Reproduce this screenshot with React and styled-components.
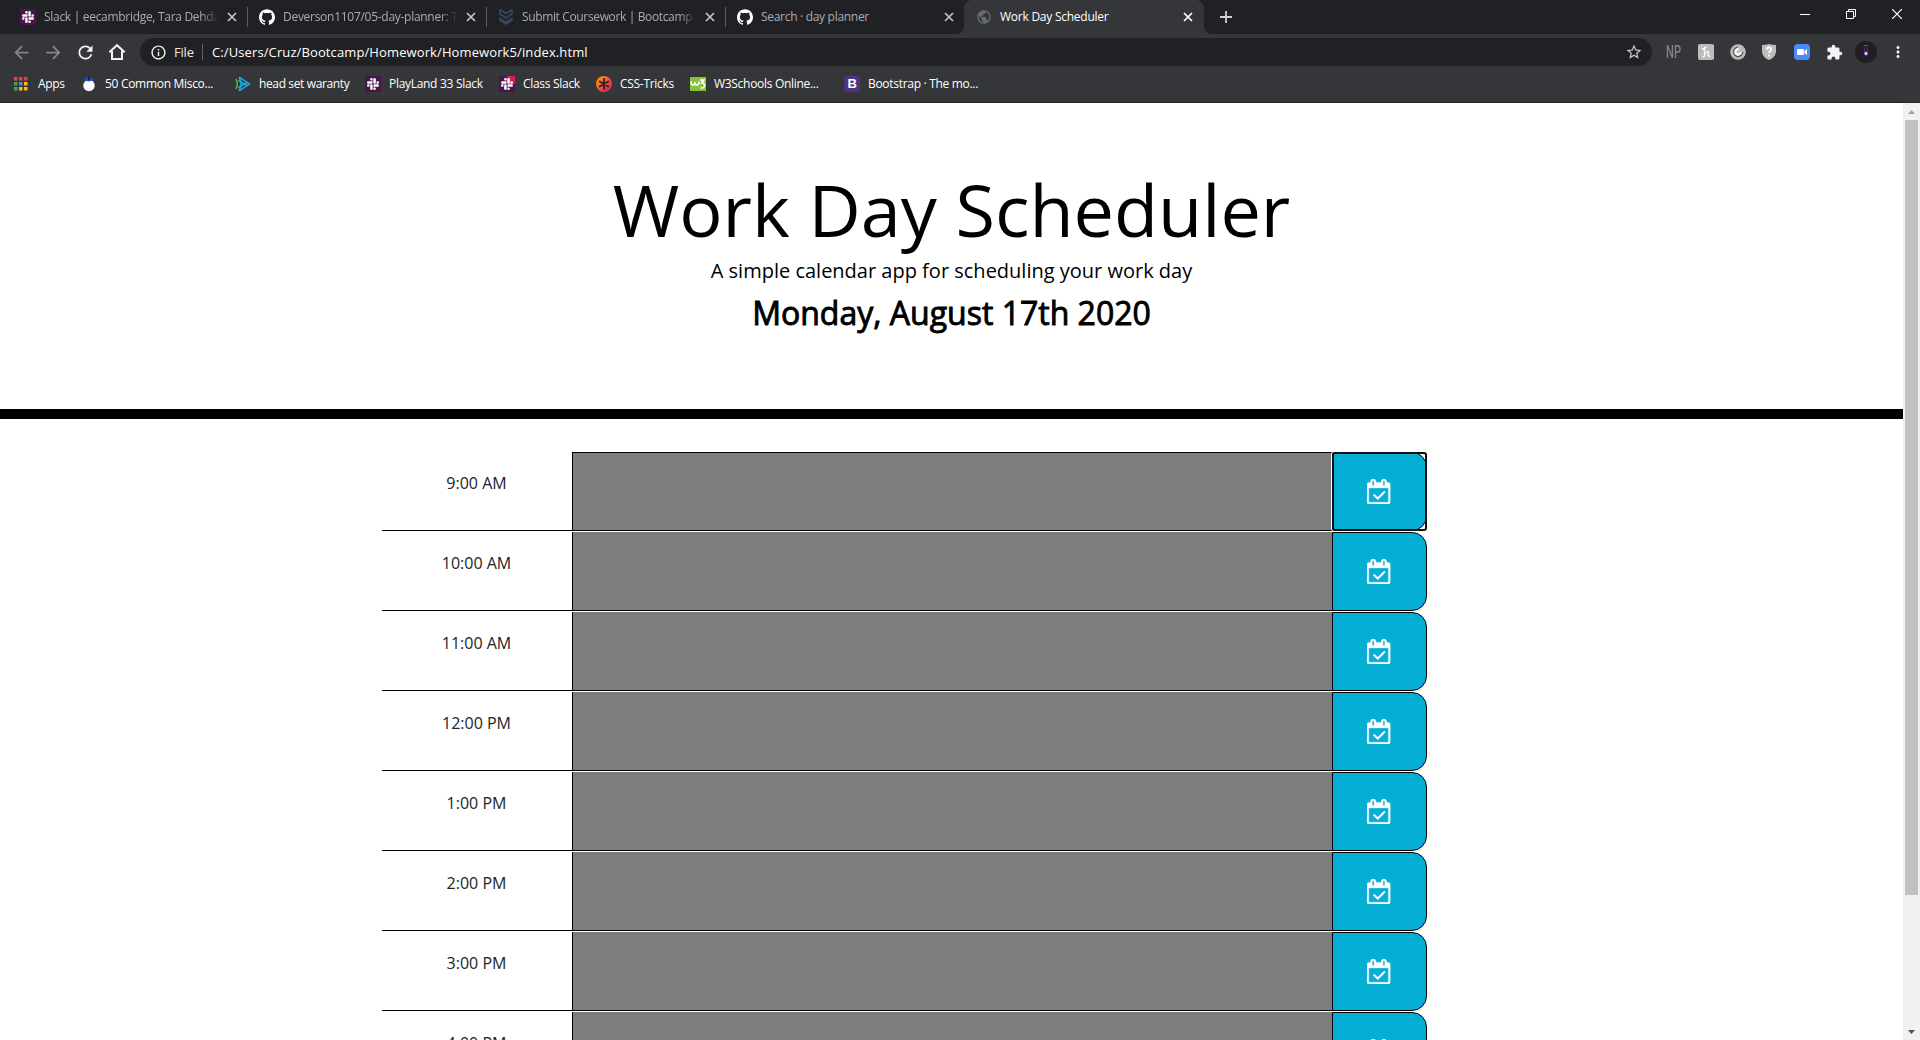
import React from 'react';
import styled, { createGlobalStyle } from 'styled-components';
import { SiGithub, SiSlack } from 'react-icons/si';
import { MdArrowBack, MdArrowForward, MdRefresh, MdInfoOutline, MdStarBorder, MdExtension, MdMoreVert, MdPublic } from 'react-icons/md';

const Global = createGlobalStyle`
  * { box-sizing: border-box; }
  html, body { margin: 0; height: 1040px; overflow: hidden; background: #fff; }
  body { font-family: "Open Sans", sans-serif; }
  svg { display: block; flex: none; }
`;

const Window = styled.div`
  width: 1920px;
  height: 1040px;
  display: flex;
  flex-direction: column;
  overflow: hidden;
`;

const TabStrip = styled.div`
  height: 34px;
  flex: none;
  display: flex;
  background: #202124;
  padding-left: 8px;
`;

const Tab = styled.div`
  width: ${p => p.$w}px;
  height: 34px;
  flex: none;
  display: flex;
  align-items: center;
  padding: 0 ${p => p.$right ?? 10}px 0 ${p => p.$left ?? 11}px;
  border-radius: 8px 8px 0 0;
  background: ${p => (p.$active ? '#35363a' : 'transparent')};
  color: ${p => (p.$active ? '#fff' : '#a9acb0')};
`;

const TabTitle = styled.div`
  flex: 1;
  min-width: 0;
  margin: 0 8px 0 8px;
  padding-bottom: 1px;
  overflow: hidden;
  white-space: nowrap;
  font-size: 12px;
  letter-spacing: ${p => p.$ls || 0}px;
  mask-image: ${p => (p.$fade ? 'linear-gradient(to right, #000 90%, transparent)' : 'none')};
`;

const TabDivider = styled.div`
  width: 1px;
  height: 20px;
  margin-top: 7px;
  flex: none;
  background: #5a5c60;
`;

const TabFoot = styled.svg`
  align-self: flex-end;
`;

const NewTab = styled.div`
  padding: 11px 0 0 8px;
`;

const WindowControls = styled.div`
  display: flex;
  align-items: center;
  gap: 36px;
  margin-left: auto;
  padding: 0 18px 6px 0;
`;

const Toolbar = styled.div`
  height: 34px;
  flex: none;
  display: flex;
  align-items: center;
  background: #35363a;
  padding: 4px 15px 2px 11px;
  color: #f1f3f4;
`;

const NavIcons = styled.div`
  display: flex;
  align-items: center;
  gap: 11px;
  width: 129px;
  flex: none;
`;

const Address = styled.div`
  width: 1512px;
  height: 28px;
  flex: none;
  display: flex;
  align-items: center;
  border-radius: 14px;
  background: #202124;
  padding: 0 9px 0 10px;
`;

const Scheme = styled.span`
  width: 28px;
  margin-left: 7px;
  font-size: 13px;
  letter-spacing: -0.2px;
  color: #e8eaed;
`;

const AddressDivider = styled.span`
  width: 1px;
  height: 16px;
  margin-right: 9px;
  background: #5f6368;
`;

const Url = styled.span`
  flex: 1;
  white-space: nowrap;
  font-size: 13px;
  letter-spacing: 0.11px;
  color: #fff;
`;

const Extensions = styled.div`
  display: flex;
  align-items: center;
  margin-left: 14px;
`;

const Slot = styled.div`
  width: ${p => p.$w}px;
  flex: none;
`;

const NpLabel = styled.span`
  display: block;
  width: 20px;
  font: 500 18px/20px Roboto, sans-serif;
  color: #818286;
  transform: scaleX(0.62);
  transform-origin: left;
`;

const Avatar = styled.div`
  width: 22px;
  height: 22px;
  border-radius: 50%;
  background: #211d20;
  display: flex;
  flex-direction: column;
  align-items: center;
  padding-top: 4px;
`;

const Bookmarks = styled.div`
  height: 35px;
  flex: none;
  display: flex;
  align-items: center;
  background: #35363a;
  border-bottom: 1px solid #242528;
  padding: 0 0 3px 14px;
`;

const Bookmark = styled.div`
  width: ${p => p.$w}px;
  flex: none;
  display: flex;
  align-items: center;
  gap: ${p => p.$gap || 8}px;
  white-space: nowrap;
  font-size: 12px;
  letter-spacing: ${p => p.$ls || 0}px;
  color: #fff;
`;

const SlackTile = styled.span`
  width: 16px;
  height: 16px;
  flex: none;
  display: flex;
  align-items: center;
  justify-content: center;
  color: #fff;
  background: ${p => (p.$badge ? 'linear-gradient(#d81f50, #d81f50) right top / 8px 8px no-repeat #4a154b' : '#4a154b')};
`;

const BootstrapTile = styled.span`
  width: 16px;
  height: 16px;
  border-radius: 3px;
  flex: none;
  background: #4c347f;
  color: #fff;
  font: bold 13px/16px "Liberation Sans", sans-serif;
  text-align: center;
`;

const W3Tile = styled.span`
  width: 16px;
  height: 14px;
  flex: none;
  background: #84c439;
`;

const Viewport = styled.div`
  flex: 1;
  min-height: 0;
  display: flex;
`;

const Page = styled.main`
  width: 1903px;
  height: 937px;
  overflow: hidden;
  background: #fff;
`;

const Header = styled.header`
  height: 316px;
  padding-top: 61px;
  border-bottom: 10px solid #000;
  text-align: center;
  color: #000;
`;

const Title = styled.h1`
  margin: 0;
  font-size: 72px;
  font-weight: 400;
  line-height: 90px;
`;

const Lead = styled.p`
  margin: 2px 0 8px;
  font-size: 20px;
  line-height: 30px;
`;

const Today = styled.p`
  margin: 0;
  font-size: 32px;
  line-height: 38px;
  -webkit-text-stroke: 0.9px #000;
`;

const Schedule = styled.section`
  width: 1140px;
  margin: 33px auto 0;
`;

const TimeBlock = styled.div`
  display: flex;
  height: 79px;
  margin-bottom: 1px;
`;

const Hour = styled.div`
  width: 190px;
  padding-top: 19px;
  border-bottom: 1px solid #000;
  text-align: center;
  font-size: 16px;
  line-height: 24px;
  color: #212529;
`;

const Entry = styled.div`
  width: 760px;
  border: 1px solid #000;
  border-top-width: ${p => (p.$first ? 1 : 0)}px;
  border-right: 0;
  background: #7d7d7d;
`;

const SaveButton = styled.button`
  position: relative;
  width: 95px;
  padding: 0;
  display: flex;
  align-items: center;
  justify-content: center;
  border: 1px solid #000;
  border-radius: 0 15px 15px 0;
  background: #06aed5;
  color: #fff;
  outline: none;
`;

const FocusRing = styled.span`
  position: absolute;
  inset: -1px;
  border: 2px solid #101010;
  border-radius: 3px;
  box-shadow: 0 0 0 1px #fff;
`;

const ScrollBar = styled.div`
  width: 17px;
  display: flex;
  flex-direction: column;
  justify-content: space-between;
  align-items: center;
  background: #f1f1f1;
`;

const ScrollThumb = styled.div`
  width: 13px;
  height: 775px;
  background: #c1c1c1;
`;

const ScrollSpace = styled.div`
  flex: 1;
`;

const ArrowBox = styled.div`
  height: 17px;
  display: flex;
  align-items: center;
`;

const Close = ({ color = '#c3c5c8' }) => (
  <svg width="10" height="10" viewBox="0 0 10 10"><path d="M1 1l8 8M9 1L1 9" stroke={color} strokeWidth="1.7" /></svg>
);

const House = () => (
  <svg width="20" height="20" viewBox="0 0 20 20" fill="none" stroke="currentColor" strokeWidth="2">
    <path d="M2.300 10.200L10 3.200l7.700 7M5 9v8h10V9" />
  </svg>
);

const CalendarCheck = () => (
  <svg width="23.2" height="25" viewBox="0 0 1664 1792" fill="currentColor" stroke="currentColor" strokeWidth="24">
    <path d="M1303 964l-512 512q-10 9-23 9t-23-9l-288-288q-9-10-9-23t9-22l46-46q9-9 22-9t23 9l220 220 444-444q10-9 23-9t22 9l46 46q9 9 9 22t-9 23zM128 1664h1408V640H128v1024zm384-1216V160q0-14-9-23t-23-9h-64q-14 0-23 9t-9 23v288q0 14 9 23t23 9h64q14 0 23-9t9-23zm768 0V160q0-14-9-23t-23-9h-64q-14 0-23 9t-9 23v288q0 14 9 23t23 9h64q14 0 23-9t9-23zm384-64v1280q0 52-38 90t-90 38H128q-52 0-90-38t-38-90V384q0-52 38-90t90-38h128v-96q0-66 47-113T416 0h64q66 0 113 47t47 113v96h384v-96q0-66 47-113t113-47h64q66 0 113 47t47 113v96h128q52 0 90 38t38 90z" />
  </svg>
);

const Chevrons = () => (
  <svg width="16" height="16" viewBox="0 0 16 16">
    <path d="M2 .5l6 4 6-4v4.500l-6 4-6-4z" fill="none" stroke="#34495e" strokeWidth="1.600" />
    <path d="M1.200 8l6.800 4.200L14.800 8v3.500L8 16l-6.800-4.500z" fill="#34495e" />
  </svg>
);

const AppsGrid = () => (
  <svg width="14" height="14" viewBox="0 0 14 14">
    {['#ea4335', '#ea4335', '#ea4335', '#34a853', '#4285f4', '#fbbc05', '#34a853', '#fbbc05', '#fbbc05'].map((c, i) => (
      <rect key={i} x={(i % 3) * 5} y={Math.floor(i / 3) * 5} width="3.5" height="3.5" fill={c} />
    ))}
  </svg>
);

const Berry = () => (
  <svg width="16" height="16" viewBox="0 0 16 16">
    <circle cx="8" cy="9.5" r="5.7" fill="#fff" />
    <path d="M3 2.500l3-1 2 1 2-1.500 1.500 1.500 2 1.500-3 .8-2.500.7-3-.7z" fill="#1b4fc4" /><path d="M8 0v4" stroke="#111" />
  </svg>
);

const PlayMark = () => (
  <svg width="16" height="16" viewBox="0 0 16 16" fill="none" strokeWidth="1.500">
    <path d="M1 3q2.500 5 0 10" stroke="#6fae3c" />
    <path d="M4 1l10.500 7L4 15M4 1q4 7 0 14M3.500 4.500L12 9.500M3.500 11.500L12 6.500" stroke="#1fa8dc" />
  </svg>
);

const AsteriskMark = () => (
  <svg width="16" height="16" viewBox="0 0 16 16">
    <defs><linearGradient id="ct" x1="0" y1="0" x2="1" y2="1"><stop offset="0.2" stopColor="#f78a12" /><stop offset="0.9" stopColor="#e01a65" /></linearGradient></defs>
    <circle cx="8" cy="8" r="8" fill="url(#ct)" />
    <path d="M8 3v10M3.700 5.500l8.600 5M12.300 5.500l-8.600 5" stroke="#35222a" strokeWidth="1.9" strokeLinecap="round" />
  </svg>
);

const W3Mark = () => (
  <W3Tile>
    <svg width="16" height="14" viewBox="0 0 16 14" fill="none" stroke="#fff" strokeWidth="1.600">
      <path d="M1 4.500q0 3.500 2 3.500t2-3q0 3 2 3t2-3.500M10 3h4l-2.300 3q3 0 2.800 2.700T10.500 11" />
    </svg>
  </W3Tile>
);

const Slack = ({ badge }) => <SlackTile $badge={badge}><SiSlack size={12} /></SlackTile>;

const tabs = [
  { w: 239, left: 12, icon: <Slack />, title: 'Slack | eecambridge, Tara Dehdari', fade: true, ls: -0.3 },
  { w: 238, icon: <SiGithub size={16} color="#fff" />, title: 'Deverson1107/05-day-planner: This', fade: true, ls: -0.28 },
  { w: 238, icon: <Chevrons />, title: 'Submit Coursework | Bootcamp Spot', fade: true, ls: -0.36 },
  { w: 230, right: 2, icon: <SiGithub size={16} color="#fff" />, title: 'Search · day planner', ls: -0.3 },
];

const bookmarks = [
  { w: 67, gap: 10, icon: <AppsGrid />, text: 'Apps' },
  { w: 154, icon: <Berry />, text: '50 Common Misco...' },
  { w: 130, icon: <PlayMark />, text: 'head set waranty', ls: -0.37 },
  { w: 134, icon: <Slack />, text: 'PlayLand 33 Slack' },
  { w: 97, icon: <Slack badge />, text: 'Class Slack' },
  { w: 94, icon: <AsteriskMark />, text: 'CSS-Tricks' },
  { w: 154, icon: <W3Mark />, text: 'W3Schools Online...' },
  { w: 150, icon: <BootstrapTile>B</BootstrapTile>, text: 'Bootstrap · The mo...' },
];

const hours = ['9:00 AM', '10:00 AM', '11:00 AM', '12:00 PM', '1:00 PM', '2:00 PM', '3:00 PM', '4:00 PM'];

export default function App() {
  return (
    <Window>
      <Global />
      <TabStrip>
        {tabs.map((t, i) => (
          <React.Fragment key={t.title}>
            <Tab $w={t.w} $left={t.left} $right={t.right}>{t.icon}<TabTitle $fade={t.fade} $ls={t.ls}>{t.title}</TabTitle><Close /></Tab>
            {i < 3 && <TabDivider />}
          </React.Fragment>
        ))}
        <TabFoot width="8" height="8"><path d="M8 0A8 8 0 0 1 0 8h8z" fill="#35363a" /></TabFoot>
        <Tab $w={240} $left={12} $right={11} $active>
          <MdPublic size={16} color="#686b70" />
          <TabTitle $ls={-0.25}>Work Day Scheduler</TabTitle>
          <Close color="#fff" />
        </Tab>
        <TabFoot width="8" height="8"><path d="M0 0A8 8 0 0 0 8 8H0z" fill="#35363a" /></TabFoot>
        <NewTab><svg width="12" height="12"><path d="M6 0v12M0 6h12" stroke="#d0d2d4" strokeWidth="1.800" /></svg></NewTab>
        <WindowControls>
          <svg width="10" height="10"><path d="M0 5.500h10" stroke="#fff" /></svg>
          <svg width="10" height="10" fill="none" stroke="#fff"><path d="M.5 2.500h7v7h-7zM2.500 2.500v-2h7v7h-2" /></svg>
          <svg width="10" height="10"><path d="M0 0l10 10M10 0L0 10" stroke="#fff" strokeWidth="1.200" /></svg>
        </WindowControls>
      </TabStrip>
      <Toolbar>
        <NavIcons>
          <MdArrowBack size={21} color="#85878a" />
          <MdArrowForward size={21} color="#85878a" />
          <MdRefresh size={21} />
          <House />
        </NavIcons>
        <Address>
          <MdInfoOutline size={17} />
          <Scheme>File</Scheme>
          <AddressDivider />
          <Url>C:/Users/Cruz/Bootcamp/Homework/Homework5/index.html</Url>
          <MdStarBorder size={18} color="#c8cacd" />
        </Address>
        <Extensions>
          <Slot $w={32}><NpLabel>NP</NpLabel></Slot>
          <Slot $w={32}>
            <svg width="16" height="16"><rect width="16" height="16" rx="2" fill="#bcbcbc" /><path d="M4 5q3.500 0 4-2.500M6.500 3v10M4.500 13q2 0 2.500-3 3-4 3.500-2 .5 1-.5 3 .5 2 2 1" fill="none" stroke="#fff" strokeWidth="1.300" /></svg>
          </Slot>
          <Slot $w={32}>
            <svg width="16" height="16"><circle cx="8" cy="8" r="7.800" fill="#bcbcbc" /><path d="M8 3q-4.500 1-4.500 5.500Q5 13 9 12.500q3-1 4-4.500" fill="none" stroke="#55565a" strokeWidth="1.200" /><path d="M9 4.500Q5 5.500 5.500 9q2 3.500 6-.5" fill="none" stroke="#fff" strokeWidth="2" /></svg>
          </Slot>
          <Slot $w={32}>
            <svg width="14" height="16"><path d="M0 1q4 0 7-1 3 1 7 1v7q-1 6-7 8-6-2-7-8z" fill="#bcbcbc" /><path d="M4.700 5.500q0-2 2.300-2t2.300 2c0 1.500-2.300 1.500-2.300 3.500M7 10.500v2" fill="none" stroke="#fff" strokeWidth="1.800" /></svg>
          </Slot>
          <Slot $w={32}>
            <svg width="16" height="16"><rect width="16" height="16" rx="4" fill="#4a8cff" /><rect x="3" y="5" width="7" height="6" rx="1.200" fill="#fff" /><path d="M10.500 7l2.500-2v6l-2.500-2z" fill="#fff" /></svg>
          </Slot>
          <Slot $w={29}><MdExtension size={17} color="#f1f3f4" /></Slot>
          <Slot $w={34}>
            <Avatar><svg width="6" height="12"><path d="M1 .5h4" stroke="#a9441c" /><path d="M1.500 2v5M4.500 2v5" stroke="#4b3153" /><circle cx="3" cy="8.500" r="2" fill="#b56cf0" /><circle cx="3" cy="8.500" r=".9" fill="#fff" /></svg></Avatar>
          </Slot>
          <MdMoreVert size={18} />
        </Extensions>
      </Toolbar>
      <Bookmarks>
        {bookmarks.map(b => (
          <Bookmark key={b.text} $w={b.w} $gap={b.gap} $ls={b.ls ?? -0.3}>{b.icon}<span>{b.text}</span></Bookmark>
        ))}
      </Bookmarks>
      <Viewport>
        <Page>
          <Header>
            <Title>Work Day Scheduler</Title>
            <Lead>A simple calendar app for scheduling your work day</Lead>
            <Today>Monday, August 17th 2020</Today>
          </Header>
          <Schedule>
            {hours.map((h, i) => (
              <TimeBlock key={h}>
                <Hour>{h}</Hour>
                <Entry $first={i === 0} />
                <SaveButton aria-label="Save">
                  <CalendarCheck />
                  {i === 0 && <FocusRing />}
                </SaveButton>
              </TimeBlock>
            ))}
          </Schedule>
        </Page>
        <ScrollBar>
          <ArrowBox><svg width="7" height="4"><path d="M0 4l3.500-4L7 4z" fill="#a3a3a3" /></svg></ArrowBox>
          <ScrollThumb />
          <ScrollSpace />
          <ArrowBox><svg width="7" height="4"><path d="M0 0l3.500 4L7 0z" fill="#505050" /></svg></ArrowBox>
        </ScrollBar>
      </Viewport>
    </Window>
  );
}
